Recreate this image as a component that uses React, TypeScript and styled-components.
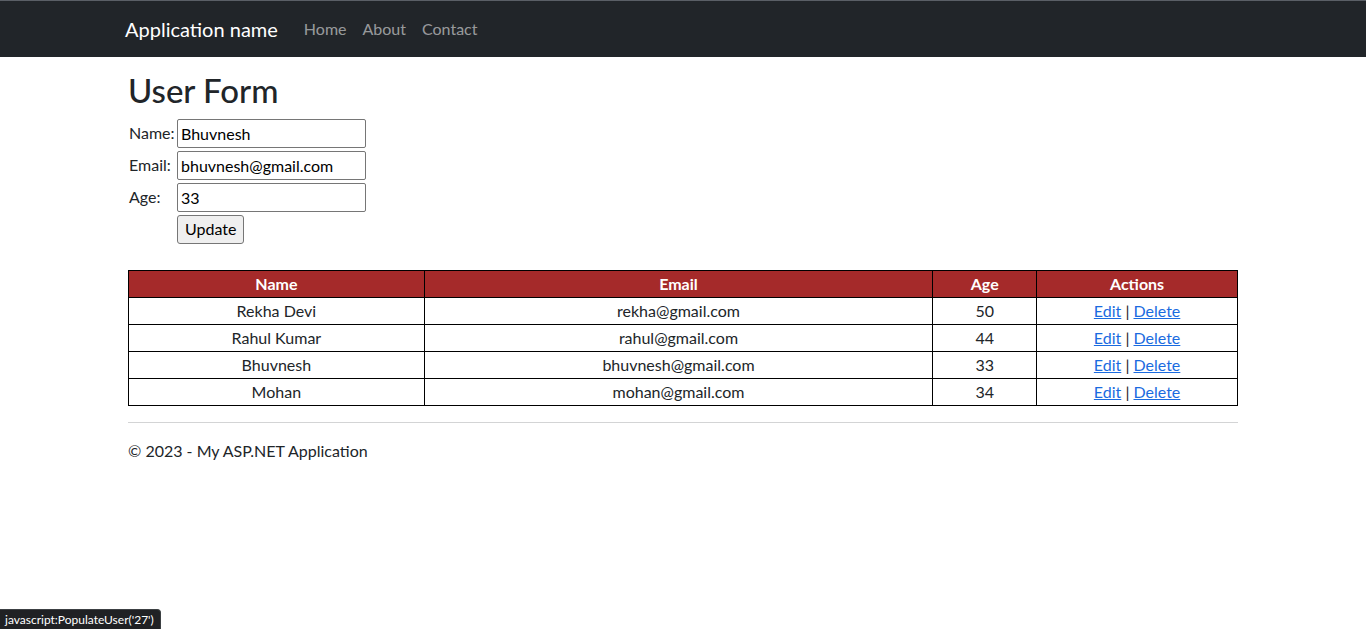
import styled, { createGlobalStyle } from "styled-components";

const GlobalStyle = createGlobalStyle`
  * { box-sizing: border-box; }
  body {
    margin: 0;
    font-family: "Segoe UI", Lato, "Liberation Sans", sans-serif;
    font-size: 16px;
    line-height: 1.5;
    color: #212529;
    background: #fff;
  }
`;

interface User {
  id: number;
  name: string;
  email: string;
  age: number;
}

const users: User[] = [
  { id: 24, name: "Rekha Devi", email: "rekha@gmail.com", age: 50 },
  { id: 25, name: "Rahul Kumar", email: "rahul@gmail.com", age: 44 },
  { id: 27, name: "Bhuvnesh", email: "bhuvnesh@gmail.com", age: 33 },
  { id: 28, name: "Mohan", email: "mohan@gmail.com", age: 34 },
];

const Navbar = styled.nav`
  background-color: #212529;
  border-top: 1px solid #5a5f66;
  height: 57px;
  display: flex;
  align-items: center;
`;

const Container = styled.div`
  width: 1140px;
  margin: 0 auto;
  padding: 0 15px;
`;

const NavInner = styled(Container)`
  display: flex;
  align-items: center;
`;

const Brand = styled.a`
  color: #fff;
  font-size: 20px;
  text-decoration: none;
  margin-left: -3px;
  margin-right: 18px;
`;

const NavLink = styled.a`
  color: rgba(255, 255, 255, 0.55);
  text-decoration: none;
  padding: 8px;
`;

const Main = styled(Container)`
  padding-top: 14px;
`;

const Title = styled.h1`
  font-size: 33px;
  font-weight: 500;
  line-height: 1.2;
  margin: 0 0 8px 0;
`;

const Form = styled.div`
  display: grid;
  grid-template-columns: 49px 189px;
  row-gap: 3px;
  align-items: center;
`;

const Label = styled.label`
  font-size: 16px;
  padding-left: 1px;
`;

const Input = styled.input`
  height: 29px;
  border: 1px solid #767676;
  border-radius: 2px;
  padding: 1px 3px;
  font: inherit;
  color: #000;
`;

const Button = styled.button`
  grid-column: 2;
  justify-self: start;
  height: 29px;
  padding: 0 7px;
  font: inherit;
  color: #000;
  background: #efefef;
  border: 1px solid #767676;
  border-radius: 3px;
`;

const Table = styled.table`
  width: 100%;
  border-collapse: collapse;
  margin-top: 26px;
`;

const HeadCell = styled.th<{ $w: number }>`
  width: ${(p) => p.$w}px;
  background-color: #a52a2a;
  color: #fff;
  font-weight: 700;
  border: 1px solid #000;
  height: 27px;
  padding: 0;
  line-height: 25px;
`;

const Cell = styled.td`
  border: 1px solid #000;
  text-align: center;
  height: 27px;
  padding: 0;
  line-height: 25px;
`;

const ActionLink = styled.a`
  color: #1a6be0;
  text-decoration: underline;
`;

const Rule = styled.hr`
  margin: 16px 0;
  border: 0;
  border-top: 1px solid #d3d4d5;
`;

const Footer = styled.footer`
  p {
    margin: 0;
  }
`;

const StatusBar = styled.div`
  position: fixed;
  left: 0;
  bottom: 0;
  background: #202124;
  color: #fff;
  font-size: 12px;
  line-height: 19px;
  padding: 0 6px 0 5px;
  border-top-right-radius: 4px;
  border: 1px solid #3c4043;
  border-left: 0;
  border-bottom: 0;
`;

export default function App() {
  return (
    <>
      <GlobalStyle />
      <Navbar>
        <NavInner>
          <Brand href="#">Application name</Brand>
          <NavLink href="#">Home</NavLink>
          <NavLink href="#">About</NavLink>
          <NavLink href="#">Contact</NavLink>
        </NavInner>
      </Navbar>
      <Main>
        <Title>User Form</Title>
        <Form>
          <Label>Name:</Label>
          <Input defaultValue="Bhuvnesh" />
          <Label>Email:</Label>
          <Input defaultValue="bhuvnesh@gmail.com" />
          <Label>Age:</Label>
          <Input defaultValue="33" />
          <Button>Update</Button>
        </Form>
        <Table>
          <thead>
            <tr>
              <HeadCell $w={296}>Name</HeadCell>
              <HeadCell $w={509}>Email</HeadCell>
              <HeadCell $w={104}>Age</HeadCell>
              <HeadCell $w={201}>Actions</HeadCell>
            </tr>
          </thead>
          <tbody>
            {users.map((u) => (
              <tr key={u.id}>
                <Cell>{u.name}</Cell>
                <Cell>{u.email}</Cell>
                <Cell>{u.age}</Cell>
                <Cell>
                  <ActionLink href={`javascript:PopulateUser('${u.id}')`}>Edit</ActionLink>
                  {" | "}
                  <ActionLink href="#">Delete</ActionLink>
                </Cell>
              </tr>
            ))}
          </tbody>
        </Table>
        <Rule />
        <Footer>
          <p>&copy; 2023 - My ASP.NET Application</p>
        </Footer>
      </Main>
      <StatusBar>javascript:PopulateUser('27')</StatusBar>
    </>
  );
}
